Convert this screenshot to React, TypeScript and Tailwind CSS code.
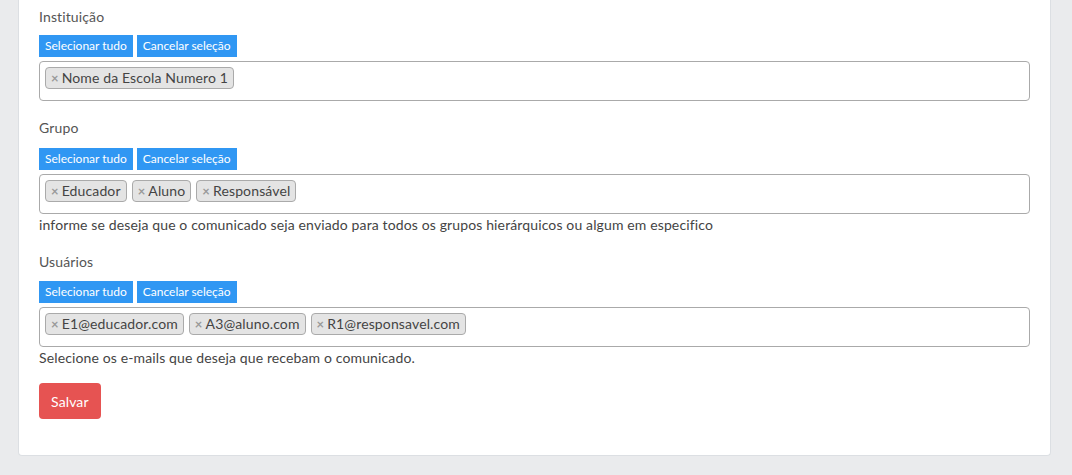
import React from "react";

const font = { fontFamily: '"Segoe UI", Lato, "Noto Sans", sans-serif' };

function Tag({ text }: { text: string }) {
  return (
    <span className="flex h-[22px] items-center rounded-[4px] border border-[#aaaaaa] bg-[#e4e4e4] px-[5px] text-[14px] leading-[20px] tracking-[0.13px] text-[#444444]">
      <span className="mr-[3px] text-[13px] font-bold text-[#999999]">×</span>
      {text}
    </span>
  );
}

function Section({
  label,
  tags,
  help,
  labelTop,
  labelGap,
}: {
  label: string;
  tags: string[];
  help?: string;
  labelTop: string;
  labelGap: string;
}) {
  return (
    <div className={labelTop}>
      <div className={`text-[14px] leading-[21px] tracking-[0.13px] text-[#555555] ${labelGap}`}>{label}</div>
      <div className="flex gap-[4px]">
        <button className="h-[22px] bg-[#3097f3] px-[6px] text-[12px] leading-[22px] text-white">
          Selecionar tudo
        </button>
        <button className="h-[22px] bg-[#3097f3] px-[6px] text-[12px] leading-[22px] text-white">
          Cancelar seleção
        </button>
      </div>
      <div className="mt-[4px] flex h-[40px] items-start gap-[5px] rounded-[4px] border border-[#aaaaaa] px-[5px] pt-[5px]">
        {tags.map((t) => (
          <Tag key={t} text={t} />
        ))}
      </div>
      {help && (
        <div className="text-[14px] leading-[21px] tracking-[0.13px] text-[#444444]">{help}</div>
      )}
    </div>
  );
}

export default function App() {
  return (
    <div className="min-h-[475px] bg-[#eaebed] pl-[18px]" style={font}>
      <div className="w-[1033px] rounded-b-[4px] border-x border-b border-[#dcdfe3] bg-white px-[20px] pb-[36px]">
        <Section
          label="Instituição"
          tags={["Nome da Escola Numero 1"]}
          labelTop="pt-[6px]"
          labelGap="mb-[8px]"
        />
        <Section
          label="Grupo"
          tags={["Educador", "Aluno", "Responsável"]}
          help="informe se deseja que o comunicado seja enviado para todos os grupos hierárquicos ou algum em especifico"
          labelTop="pt-[16px]"
          labelGap="mb-[10px]"
        />
        <Section
          label="Usuários"
          tags={["E1@educador.com", "A3@aluno.com", "R1@responsavel.com"]}
          help="Selecione os e-mails que deseja que recebam o comunicado."
          labelTop="pt-[16px]"
          labelGap="mb-[9px]"
        />
        <button className="mt-[15px] h-[36px] rounded-[4px] bg-[#e65352] px-[12px] text-[14px] tracking-[0.13px] text-white">
          Salvar
        </button>
      </div>
    </div>
  );
}
